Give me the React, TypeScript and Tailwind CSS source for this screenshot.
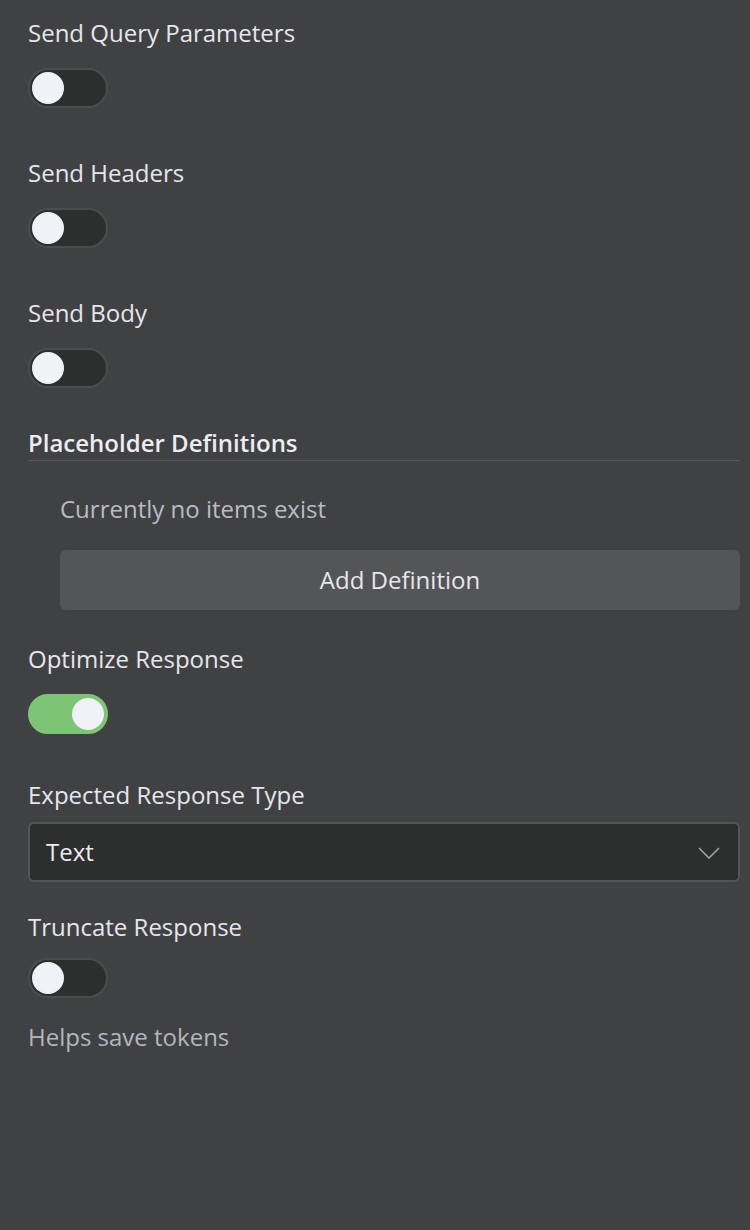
function Toggle({ on = false }: { on?: boolean }) {
  return (
    <div
      className={`flex h-10 w-20 items-center rounded-full border-2 p-[2px] ${
        on ? "justify-end border-[#7dc474] bg-[#7dc474]" : "justify-start border-[#4b4c4d] bg-[#2d2f2e]"
      }`}
    >
      <div className="h-8 w-8 rounded-full bg-[#f1f2f8]" />
    </div>
  );
}

function Label({ children, className = "" }: { children: React.ReactNode; className?: string }) {
  return <p className={`text-[24px] leading-[30px] text-[#e6e6ec] ${className}`}>{children}</p>;
}

export default function App() {
  return (
    <div
      className="min-h-screen bg-[#404143] pl-[28px] pr-[10px] pt-[18px]"
      style={{ fontFamily: '"Open Sans", "Noto Sans", sans-serif' }}
    >
      <Label>Send Query Parameters</Label>
      <div className="mt-5">
        <Toggle />
      </div>

      <Label className="mt-[50px]">Send Headers</Label>
      <div className="mt-5">
        <Toggle />
      </div>

      <Label className="mt-[50px]">Send Body</Label>
      <div className="mt-5">
        <Toggle />
      </div>

      <div className="mt-10 border-b border-[#58595b] pb-[2px]">
        <p className="text-[24px] font-semibold leading-[30px] text-[#ececf2]">Placeholder Definitions</p>
      </div>

      <div className="pl-8">
        <p className="mt-[33px] text-[24px] leading-[30px] text-[#babbc4]">Currently no items exist</p>
        <button className="mt-[26px] flex h-[60px] w-full items-center justify-center rounded-md bg-[#545557] text-[24px] text-[#e6e6ec]">
          Add Definition
        </button>
      </div>

      <Label className="mt-[34px]">Optimize Response</Label>
      <div className="mt-5">
        <Toggle on />
      </div>

      <Label className="mt-[46px]">Expected Response Type</Label>
      <div className="mt-3 flex h-[60px] items-center justify-between rounded-md border-2 border-[#535456] bg-[#2d2e2e] pl-4 pr-[18px]">
        <span className="text-[24px] text-[#ececf2]">Text</span>
        <svg width="22" height="12" viewBox="0 0 22 12" fill="none" className="mt-[2px]">
          <path d="M1 1 L11 11 L21 1" stroke="#a4a5ae" strokeWidth="1.5" />
        </svg>
      </div>

      <Label className="mt-[30px]">Truncate Response</Label>
      <div className="mt-4">
        <Toggle />
      </div>

      <p className="mt-6 text-[24px] leading-[30px] text-[#b4b5bf]">Helps save tokens</p>
    </div>
  );
}
